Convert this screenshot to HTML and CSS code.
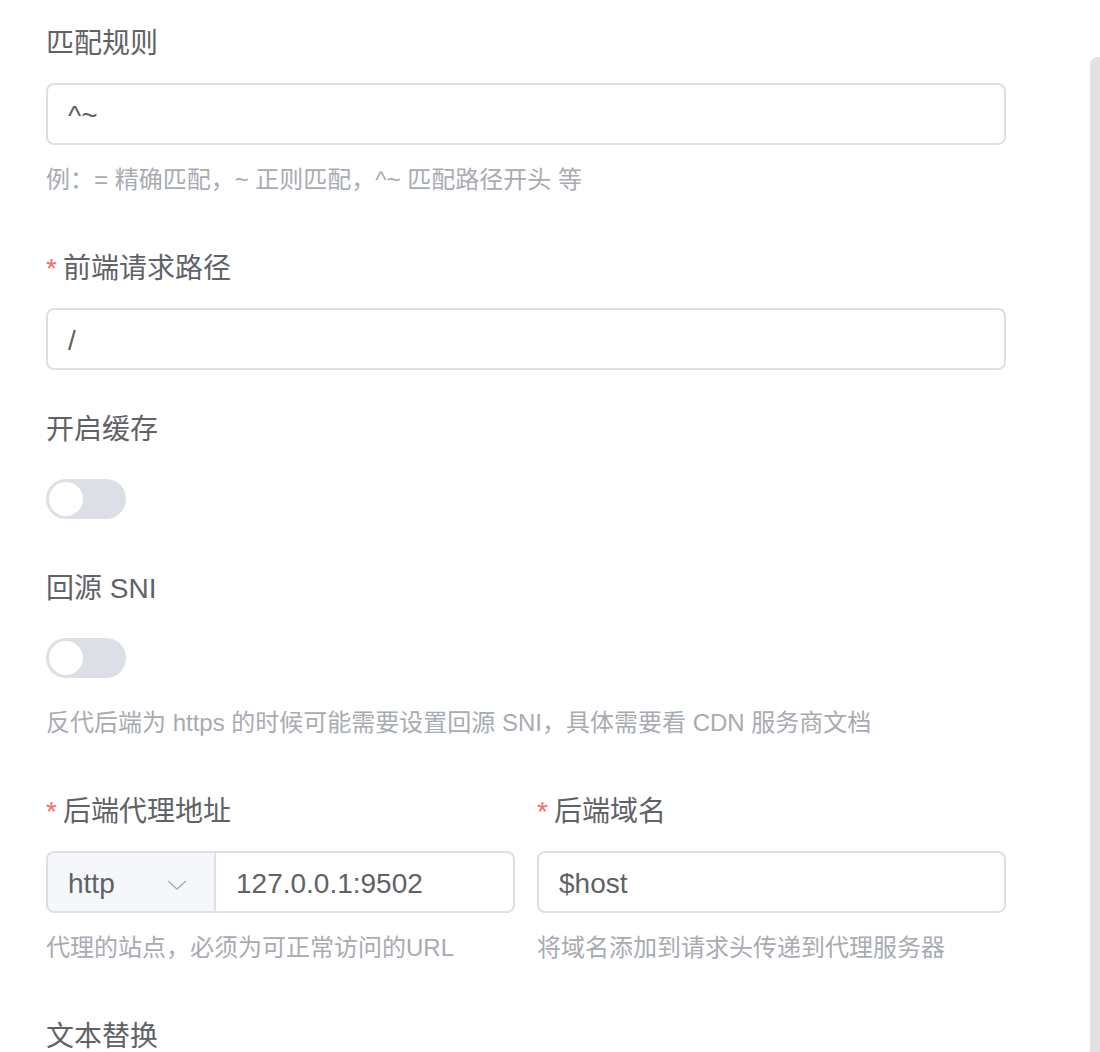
FILE: index.html
```html
<!DOCTYPE html>
<html lang="zh-CN">
<head>
<meta charset="utf-8">
<title>表单</title>
<link rel="stylesheet" href="styles.css">
</head>
<body>
<div class="page">
  <form class="form">
    <div class="item">
      <div class="label">匹配规则</div>
      <div class="input"><span class="value">^~</span></div>
      <div class="help">例：= 精确匹配，~ 正则匹配，^~ 匹配路径开头 等</div>
    </div>

    <div class="item">
      <div class="label required">前端请求路径</div>
      <div class="input"><span class="value">/</span></div>
    </div>

    <div class="item">
      <div class="label">开启缓存</div>
      <div class="switch-row"><span class="switch"><span class="knob"></span></span></div>
    </div>

    <div class="item">
      <div class="label">回源 SNI</div>
      <div class="switch-row"><span class="switch"><span class="knob"></span></span></div>
      <div class="help">反代后端为 https 的时候可能需要设置回源 SNI，具体需要看 CDN 服务商文档</div>
    </div>

    <div class="cols">
      <div class="item">
        <div class="label required">后端代理地址</div>
        <div class="group">
          <div class="select">
            <span class="value">http</span>
            <svg class="chevron" width="20" height="10" viewBox="0 0 20 10"><polyline points="1,1 10,9 19,1" fill="none" stroke="#a8abb2" stroke-width="1.4"/></svg>
          </div>
          <div class="group-input"><span class="value">127.0.0.1:9502</span></div>
        </div>
        <div class="help">代理的站点，必须为可正常访问的URL</div>
      </div>
      <div class="item">
        <div class="label required">后端域名</div>
        <div class="input"><span class="value">$host</span></div>
        <div class="help">将域名添加到请求头传递到代理服务器</div>
      </div>
    </div>

    <div class="item">
      <div class="label">文本替换</div>
    </div>
  </form>
  <div class="scroll-track"></div>
</div>
</body>
</html>
```

FILE: styles.css
```css
html, body {
  margin: 0;
  padding: 0;
  background: #ffffff;
}

body {
  font-family: "Liberation Sans", "Noto Sans CJK SC", sans-serif;
  color: #606266;
  overflow: hidden;
}

.page {
  position: relative;
  height: 1052px;
  overflow: hidden;
}

.form {
  padding: 22px 0 0 46px;
  width: 960px;
}

.item {
  margin-bottom: 38px;
}

.label {
  font-size: 28px;
  line-height: 44px;
  height: 44px;
  margin-bottom: 17px;
  color: #606266;
  white-space: nowrap;
}

.label.required::before {
  content: "*";
  color: #f56c6c;
  margin-right: 6px;
}

.input {
  box-sizing: border-box;
  height: 62px;
  border: 2px solid #dcdfe6;
  border-radius: 8px;
  display: flex;
  align-items: center;
  padding: 0 20px;
  background: #fff;
}

.value {
  font-size: 28px;
  color: #606266;
  white-space: nowrap;
  margin-top: 4px;
}

.help {
  font-size: 24px;
  line-height: 34px;
  color: #a8abb2;
  padding-top: 18px;
  padding-bottom: 12px;
  white-space: nowrap;
}

.switch-row {
  height: 60px;
  display: flex;
  align-items: center;
}

.switch {
  box-sizing: border-box;
  width: 80px;
  height: 40px;
  border-radius: 20px;
  background: #dcdfe6;
  padding: 3px;
  display: flex;
  align-items: center;
}

.knob {
  width: 34px;
  height: 34px;
  border-radius: 50%;
  background: #ffffff;
}

.cols {
  display: grid;
  grid-template-columns: 469px 469px;
  column-gap: 22px;
}

.group {
  display: flex;
  height: 62px;
}

.select {
  box-sizing: border-box;
  width: 170px;
  height: 62px;
  background: #f5f7fa;
  border: 2px solid #dcdfe6;
  border-radius: 8px 0 0 8px;
  display: flex;
  align-items: center;
  justify-content: space-between;
  padding: 0 27px 0 20px;
}

.chevron {
  display: block;
  margin-top: 6px;
}

.group-input {
  box-sizing: border-box;
  flex: 1;
  height: 62px;
  border: 2px solid #dcdfe6;
  border-left: none;
  border-radius: 0 8px 8px 0;
  display: flex;
  align-items: center;
  padding: 0 20px;
}

.scroll-track {
  position: absolute;
  right: 0;
  top: 57px;
  bottom: 0;
  width: 10px;
  background: #e1e1e3;
  border-top-left-radius: 8px;
}
```
